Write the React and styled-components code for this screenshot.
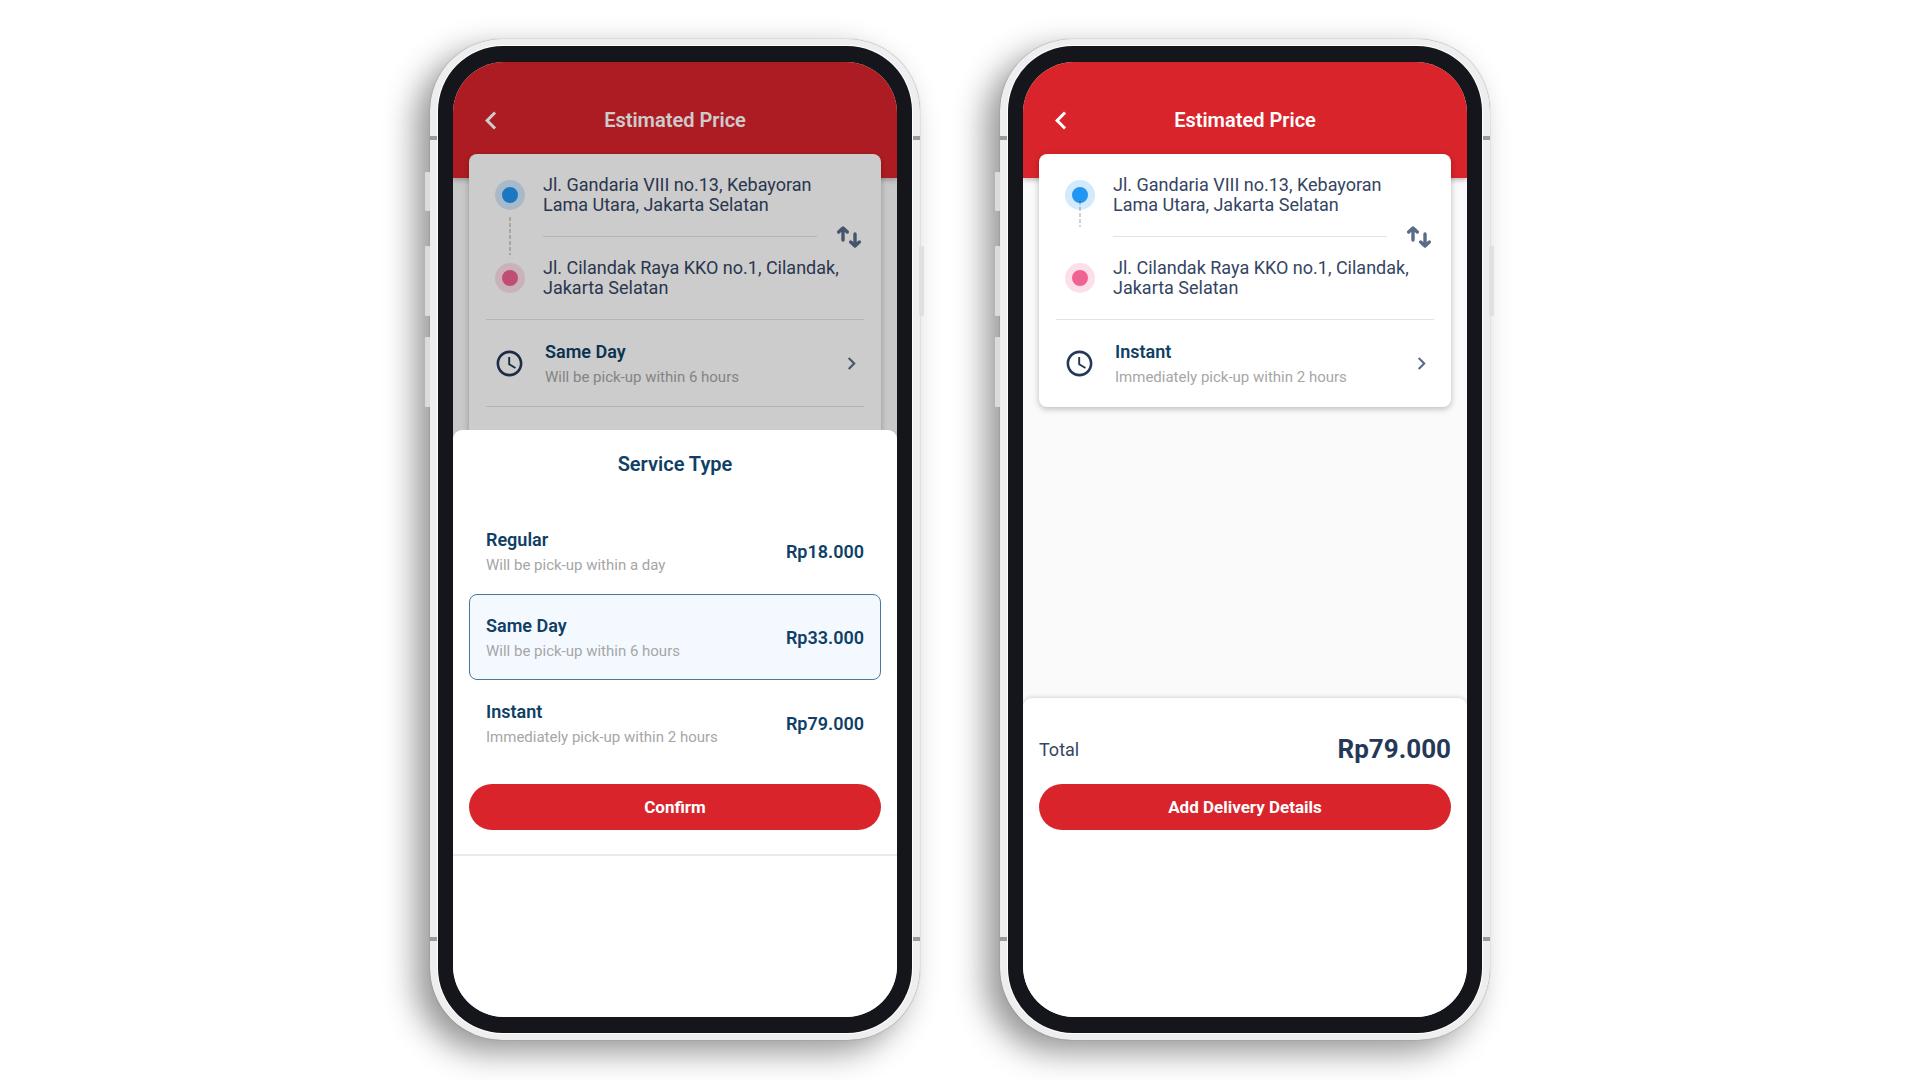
import React, { useState } from 'react'
import styled, { createGlobalStyle } from 'styled-components';
import { MdChevronLeft, MdChevronRight, MdSchedule } from 'react-icons/md';

const GlobalStyle = createGlobalStyle`
    * {
        box-sizing: border-box;
    }

    body {
        margin: 0;
        background: #fff;
        font-family: Roboto, "Liberation Sans", sans-serif;
        color: #344563;
    }

    button {
        font-family: inherit;
        color: inherit;
        border: 0;
        padding: 0;
        background: none;
        cursor: pointer;
    }
`;

const Page = styled.main`
    display: flex;
    flex-wrap: wrap;
    align-items: flex-start;
    justify-content: center;
    gap: 80px;
    min-height: 100vh;
    padding: 39px 0;
    overflow: hidden;
`;

/* phone shell */

const Frame = styled.div`
    position: relative;
    width: 490px;
    height: 1001px;
    padding: 7px 8px;
    border-radius: 72px;
    background: #eee;
    box-shadow: -14px 12px 32px rgba(0, 0, 0, 0.42), 0 0 1px rgba(0, 0, 0, 0.5);
`;

const SideButton = styled.span`
    position: absolute;
    top: ${props => props.$top}px;
    ${props => (props.$right ? 'right: -4px;' : 'left: -5px;')}
    width: 5px;
    height: ${props => props.$height}px;
    background: ${props => (props.$right ? '#e0e0e0' : '#dadcdc')};
    border-radius: 1px;
`;

const Band = styled.span`
    position: absolute;
    left: 0;
    right: 0;
    ${props => (props.$bottom ? 'bottom: 99px;' : 'top: 97px;')}
    height: 4px;
    background: #9b9b9b;
`;

const Bezel = styled.div`
    position: relative;
    height: 100%;
    padding: 16px 15px;
    border-radius: 65px;
    background: #15161b;
    box-shadow: 0 0 0 1px #fff;
`;

const Screen = styled.div`
    position: relative;
    display: flex;
    flex-direction: column;
    height: 100%;
    border-radius: 51px;
    overflow: hidden;
    background: #fafafa;
`;

/* estimate screen */

const Header = styled.header`
    display: grid;
    grid-template-columns: 1fr auto 1fr;
    align-items: center;
    flex: none;
    height: 116px;
    padding: 0 20px;
    background: #d9242b;
    color: #fff;
    box-shadow: 0 2px 5px rgba(0, 0, 0, 0.25);
`;

const BackButton = styled.button`
    display: flex;
    width: 36px;
`;

const HeaderTitle = styled.h1`
    margin: 0;
    font-size: 20px;
    line-height: 24px;
    font-weight: 600;
`;

const Card = styled.section`
    position: relative;
    flex: none;
    margin: -24px 16px 0;
    padding: 0 17px;
    border-radius: 8px;
    background: #fff;
    box-shadow: 0 2px 6px rgba(0, 0, 0, 0.25);
`;

const Route = styled.div`
    padding: 21px 0;
    border-bottom: 1px solid #e3e3e3;
`;

const Stop = styled.div`
    display: flex;
    align-items: center;
    gap: 18px;
    padding-left: 9px;
`;

const Dot = styled.span`
    flex: none;
    width: 30px;
    height: 30px;
    border: 7px solid ${props => props.$halo};
    border-radius: 50%;
    background: ${props => props.$color};
`;

const Address = styled.p`
    margin: 0;
    font-size: 18px;
    line-height: 20px;
    white-space: pre-line;
`;

const Between = styled.div`
    display: flex;
    align-items: center;
    height: 43px;
    padding-left: 23px;
`;

const Dashes = styled.span`
    position: relative;
    align-self: flex-start;
    width: 2px;
    height: ${props => (props.$short ? 26 : 38)}px;
    margin-top: ${props => (props.$short ? -14 : 2)}px;
    margin-right: 32px;
    background: repeating-linear-gradient(rgba(0, 0, 0, 0.18) 0 4px, transparent 4px 6px);
`;

const Line = styled.span`
    flex: 1;
    height: 1px;
    background: #e3e3e3;
`;

const SwapButton = styled.button`
    display: flex;
    width: 24px;
    margin: 0 3px 0 20px;
    color: #596b87;
`;

const ServiceButton = styled.button`
    display: flex;
    align-items: center;
    width: 100%;
    height: 87px;
    padding: 0 0 0 8px;
    text-align: left;
    ${props => props.$line && 'border-bottom: 1px solid #e3e3e3;'}
`;

const Info = styled.span`
    display: flex;
    flex-direction: column;
    gap: 3px;
    flex: 1;
`;

const Name = styled.span`
    font-size: 18px;
    line-height: 24px;
    font-weight: 600;
    color: #0f3f66;
`;

const Note = styled.span`
    font-size: 15px;
    line-height: 20px;
    color: #a6a6a6;
`;

const ClockIcon = styled(MdSchedule)`
    flex: none;
    margin-right: 20px;
    color: #253858;
`;

const NextIcon = styled(MdChevronRight)`
    flex: none;
    color: #596b87;
`;

/* bottom panels */

const Backdrop = styled.div`
    position: absolute;
    inset: 0;
    display: flex;
    flex-direction: column;
    justify-content: flex-end;
    background: rgba(0, 0, 0, 0.2);
`;

const Sheet = styled.form`
    height: 587px;
    border-radius: 9px 9px 0 0;
    background: #fff;
`;

const SheetBody = styled.div`
    padding: 0 16px 24px;
    border-bottom: 2px solid #eaeaea;
`;

const SheetTitle = styled.h2`
    margin: 0;
    padding: 22px 0 32px;
    font-size: 20px;
    line-height: 24px;
    font-weight: 600;
    text-align: center;
    color: #0f3f66;
`;

const Option = styled.label`
    display: flex;
    align-items: center;
    height: 86px;
    padding: 0 16px;
    border: 1px solid ${props => (props.$selected ? '#4a7799' : 'transparent')};
    border-radius: 8px;
    background: ${props => (props.$selected ? '#f4f9ff' : 'transparent')};
    cursor: pointer;
`;

const Radio = styled.input`
    appearance: none;
    width: 0;
    height: 0;
    margin: 0;
`;

const Price = styled.strong`
    font-size: 18px;
    font-weight: 600;
    color: #0f3f66;
`;

const Primary = styled.button`
    display: block;
    width: 100%;
    height: 46px;
    border-radius: 23px;
    background: #d9242b;
    color: #fff;
    font-size: 17px;
    font-weight: 700;
`;

const Confirm = styled(Primary)`
    margin-top: 18px;
`;

const Footer = styled.footer`
    height: 319px;
    margin-top: auto;
    padding: 35px 16px 0;
    border-radius: 9px 9px 0 0;
    background: #fff;
    box-shadow: 0 -1px 4px rgba(0, 0, 0, 0.15);
`;

const TotalRow = styled.div`
    display: flex;
    align-items: center;
    justify-content: space-between;
    height: 32px;
    margin-bottom: 19px;
    font-size: 18px;
`;

const Total = styled.strong`
    font-size: 26px;
    font-weight: 700;
    color: #253858;
`;

const services = [
    { id: 'regular', name: 'Regular', note: 'Will be pick-up within a day', price: 'Rp18.000' },
    { id: 'sameday', name: 'Same Day', note: 'Will be pick-up within 6 hours', price: 'Rp33.000' },
    { id: 'instant', name: 'Instant', note: 'Immediately pick-up within 2 hours', price: 'Rp79.000' },
];

const SwapIcon = () => (
    <svg width="24" height="22" viewBox="0 0 24 22" fill="none" stroke="currentColor" strokeWidth="3.400" strokeLinecap="round" strokeLinejoin="round">
        <path d="M6 14V2.500M1.700 6L6 2L10.300 6" />
        <path d="M18 8v11M13.700 16L18 20L22.300 16" />
    </svg>
)

const Phone = ({ children }) => (
    <Frame>
        <SideButton $top={133} $height={39} />
        <SideButton $top={207} $height={70} />
        <SideButton $top={298} $height={70} />
        <SideButton $top={207} $height={70} $right />
        <Band />
        <Band $bottom />
        <Bezel>
            <Screen>{children}</Screen>
        </Bezel>
    </Frame>
)

const Estimate = ({ service, pending }) => (
    <>
        <Header>
            <BackButton aria-label="Back"><MdChevronLeft size={37} /></BackButton>
            <HeaderTitle>Estimated Price</HeaderTitle>
        </Header>
        <Card>
            <Route>
                <Stop>
                    <Dot $color="#2196f3" $halo="#d3e9fc" />
                    <Address>{'Jl. Gandaria VIII no.13, Kebayoran\nLama Utara, Jakarta Selatan'}</Address>
                </Stop>
                <Between>
                    <Dashes $short={!pending} />
                    <Line />
                    <SwapButton aria-label="Swap addresses"><SwapIcon /></SwapButton>
                </Between>
                <Stop>
                    <Dot $color="#f06292" $halo="#fcdfe9" />
                    <Address>{'Jl. Cilandak Raya KKO no.1, Cilandak,\nJakarta Selatan'}</Address>
                </Stop>
            </Route>
            <ServiceButton $line={pending}>
                <ClockIcon size={31} />
                <Info>
                    <Name>{service.name}</Name>
                    <Note>{service.note}</Note>
                </Info>
                <NextIcon size={25} />
            </ServiceButton>
            {pending && <ServiceButton />}
        </Card>
    </>
)

const App = () => {
    const [selected, setSelected] = useState('sameday');
    const current = services.find(s => s.id === selected);

    return (
        <>
        <GlobalStyle />
        <Page>
            <Phone>
                <Estimate service={current} pending />
                <Backdrop>
                    <Sheet onSubmit={e => e.preventDefault()}>
                        <SheetBody>
                            <SheetTitle>Service Type</SheetTitle>
                            {services.map(s => (
                                <Option key={s.id} $selected={s.id === selected}>
                                    <Radio
                                        type="radio"
                                        name="service"
                                        checked={s.id === selected}
                                        onChange={() => setSelected(s.id)}
                                    />
                                    <Info>
                                        <Name>{s.name}</Name>
                                        <Note>{s.note}</Note>
                                    </Info>
                                    <Price>{s.price}</Price>
                                </Option>
                            ))}
                            <Confirm>Confirm</Confirm>
                        </SheetBody>
                    </Sheet>
                </Backdrop>
            </Phone>

            <Phone>
                <Estimate service={services[2]} />
                <Footer>
                    <TotalRow>
                        Total
                        <Total>{services[2].price}</Total>
                    </TotalRow>
                    <Primary>Add Delivery Details</Primary>
                </Footer>
            </Phone>
        </Page>
        </>
    )
}

export default App
